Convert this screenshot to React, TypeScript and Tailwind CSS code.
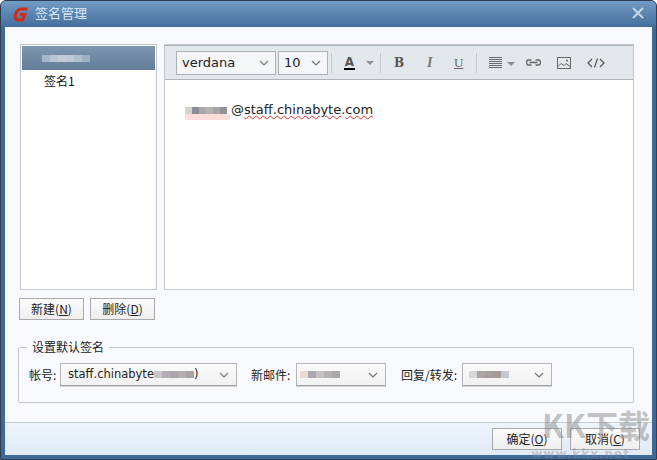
import type { ReactNode } from "react";

const FONT = "font-['DejaVu_Sans','Noto_Sans_CJK_SC',sans-serif]";
const CJK = "font-['Noto_Sans_CJK_SC','DejaVu_Sans',sans-serif]";

// mosaic that hides the private bits of the address
function Mosaic({ colors, cell = 7, h = 7 }: { colors: string[]; cell?: number; h?: number }) {
    return (
        <span className="inline-flex shrink-0">
            {colors.map((c, i) => (
                <span key={i} style={{ background: c, width: cell, height: h }} />
            ))}
        </span>
    );
}

function Chevron({ className = "" }: { className?: string }) {
    return (
        <svg width="10" height="6" viewBox="0 0 10 6" fill="none" className={className}>
            <path d="M1 1l4 4 4-4" stroke="#777" strokeWidth="1.2" />
        </svg>
    );
}

function Caret() {
    return <span className="w-0 h-0 border-x-[4px] border-x-transparent border-t-[4px] border-t-[#8a9096]" />;
}

function Select({ width, children }: { width: string; children: ReactNode }) {
    return (
        <div className={`${width} h-[23px] flex items-center justify-between pl-[7px] pr-[7px] border border-[#b4b4b4] border-b-[#a0a0a0] bg-gradient-to-b from-[#fbfbfb] to-[#f1f1f1] shadow-[0_1px_0_#d5d5d5]`}>
            {children}
            <Chevron />
        </div>
    );
}

function Button({ label, hot, width }: { label: string; hot: string; width: string }) {
    return (
        <button className={`${width} h-[22px] flex items-center justify-center border border-[#a9a9a9] bg-gradient-to-b from-[#fcfcfc] to-[#eeeeee] text-[12px] text-[#222] ${CJK}`}>
            {label}(<span className="underline">{hot}</span>)
        </button>
    );
}

function ToolbarDivider() {
    return <span className="w-px h-[20px] bg-[#c3c9cd]" />;
}

export default function App() {
    return (
        <div className={`w-[657px] h-[460px] relative overflow-hidden flex flex-col bg-[#3f6a98] border border-[#2e3f55] rounded-t-[6px] ${FONT}`}>
            {/* title bar */}
            <div className="h-[26px] shrink-0 flex items-center pl-[12px] pr-[10px] pb-[2px] bg-gradient-to-b from-[#729bc6] to-[#446e9c]">
                <svg width="16" height="17" viewBox="0 0 16 17" fill="none" className="mt-[2px]">
                    <path d="M14.500 3H8C5 3 3.500 5.500 2.500 8.500 1.500 12 2.500 14 5 14H9.500L11.500 8.500H7" stroke="#cf2a14" strokeWidth="3.200" />
                </svg>
                <span className={`ml-[6px] text-[13px] text-[#d9e6f3] ${CJK}`}>签名管理</span>
                <svg width="12" height="12" viewBox="0 0 12 12" className="ml-auto mr-[2px]">
                    <path d="M1 1l10 10M11 1L1 11" stroke="#c4d6e8" strokeWidth="2" />
                </svg>
            </div>

            {/* client area */}
            <div className="flex-1 mx-1 mb-1 flex flex-col bg-[#f8faff]">
                <div className="flex-1 flex flex-col pt-[17px] pl-[14px] pr-[18px]">
                    <div className="flex h-[246px] pl-px gap-[7px]">
                        {/* signature list */}
                        <div className={`w-[137px] border border-[#c2c7cc] bg-white p-px text-[12px] ${CJK}`}>
                            <div className="h-[24px] flex items-center pl-5 bg-gradient-to-b from-[#7d97b0] to-[#637d98]">
                                <Mosaic cell={8} colors={["#a5b7c8", "#b7c6d3", "#c1ced9", "#bccad6", "#aebfce", "#9fb2c4"]} />
                            </div>
                            <div className="pl-[22px] pt-[1px] text-[#111] leading-[20px]">签名1</div>
                        </div>

                        {/* editor */}
                        <div className="flex-1 flex flex-col border border-[#c2c7cc] bg-white">
                            <div className="h-[35px] shrink-0 flex items-center pl-[11px] bg-[#e2e7ea] border-b border-[#b0b4b8] border-t border-t-[#b0b4b8]">
                                <div className="w-[100px] h-[24px] flex items-center justify-between pl-[5px] pr-[6px] pt-[1px] bg-[#f5f6f7] border border-[#aeb2b5] text-[13px] text-[#222]">
                                    verdana
                                    <Chevron />
                                </div>
                                <div className="ml-[2px] w-[50px] h-[24px] flex items-center justify-between pl-[5px] pr-[6px] pt-[1px] bg-[#f5f6f7] border border-[#aeb2b5] text-[13px] text-[#222]">
                                    10
                                    <Chevron />
                                </div>
                                <span className="ml-[3px] flex"><ToolbarDivider /></span>
                                <div className="ml-[12px] flex flex-col items-center w-[11px]">
                                    <span className="text-[12px] font-bold leading-[12px] text-[#555]">A</span>
                                    <span className="w-[11px] h-[2px] bg-black" />
                                </div>
                                <span className="ml-[11px] flex"><Caret /></span>
                                <span className="ml-[6px] flex"><ToolbarDivider /></span>
                                <span className="ml-[13px] w-[10px] text-[12px] leading-[14px] font-bold text-[#555] font-['DejaVu_Serif',serif]">B</span>
                                <span className="ml-[23px] w-[7px] text-[14px] leading-[14px] italic font-bold text-[#777] font-['Liberation_Serif',serif]">I</span>
                                <span className="ml-[20px] w-[9px] text-[13px] leading-[14px] underline text-[#666] font-['Liberation_Serif',serif]">U</span>
                                <span className="ml-[13px] flex"><ToolbarDivider /></span>
                                <svg width="13" height="11" viewBox="0 0 13 11" className="ml-[12px]">
                                    <path d="M0 .5h13M0 2.500h13M0 4.500h13M0 6.500h13M0 8.500h13M0 10.500h13" stroke="#666b70" />
                                </svg>
                                <span className="ml-[5px] mt-[3px] flex"><Caret /></span>
                                <svg width="15" height="7" viewBox="0 0 15 7" fill="none" className="ml-[11px]">
                                    <path d="M5.500 1H2Q.7 1 .7 3.500T2 6H5.500M9.500 1H13Q14.300 1 14.300 3.500T13 6H9.500M3.500 3.500H11.500" stroke="#666" strokeWidth="1.300" />
                                </svg>
                                <svg width="14" height="12" viewBox="0 0 14 12" fill="none" className="ml-[16px]">
                                    <rect x=".5" y=".5" width="13" height="11" stroke="#666" />
                                    <path d="M1 9.500l3-3 3 2 2-2 4 3" stroke="#666" />
                                    <circle cx="10" cy="3.500" r="1" fill="#666" />
                                </svg>
                                <svg width="18" height="10" viewBox="0 0 18 10" fill="none" className="ml-[16px]">
                                    <path d="M5 1L1 5l4 4M13 1l4 4-4 4M10.500.5L7.500 9.500" stroke="#555" strokeWidth="1.200" />
                                </svg>
                            </div>
                            <div className="pl-[20px] pt-[21px] flex items-center text-[13px] leading-[18px] text-[#222]">
                                <span className="flex flex-col mr-[1px]">
                                    <Mosaic colors={["#d3d2cc", "#8b8e94", "#aaa7a9", "#b5b2b2", "#a8a4a6", "#938f97"]} />
                                    <span className="h-[6px] w-[45px] bg-[#fddcdc] mb-[-6px]" />
                                </span>
                                <span>@<span className="underline decoration-wavy decoration-[#e03030] decoration-1">staff.chinabyte</span>.<span className="underline decoration-wavy decoration-[#e03030] decoration-1">com</span></span>
                            </div>
                        </div>
                    </div>

                    {/* new / delete */}
                    <div className="flex gap-[6px] mt-2">
                        <Button label="新建" hot="N" width="w-[65px]" />
                        <Button label="删除" hot="D" width="w-[65px]" />
                    </div>

                    {/* default signature group */}
                    <fieldset className="mt-[20px] ml-[-1px] h-[63px] border border-[#c4c7ca] rounded-[2px] pl-[10px] pr-0 flex">
                        <legend className={`ml-[-2px] px-[5px] text-[12px] leading-[14px] text-[#222] ${CJK}`}>设置默认签名</legend>
                        <div className={`flex items-center h-[23px] mt-[9px] text-[12px] text-[#222] ${CJK}`}>
                            <span className="w-[31px] shrink-0">帐号:</span>
                            <Select width="w-[177px]">
                                <span className={`flex items-center text-[11.500px] ${FONT}`}>
                                    staff.chinabyte
                                    <Mosaic cell={8} colors={["#c8c6c8", "#b2aeb4", "#aaa6ac", "#b3afb1", "#a9a5a7"]} />
                                    )
                                </span>
                            </Select>
                            <span className="ml-[14px] w-[45px] shrink-0">新邮件:</span>
                            <Select width="w-[90px]">
                                <span className="ml-[-4px] flex">
                                    <Mosaic cell={8} colors={["#e8dcd0", "#a8a8ae", "#c4c0c0", "#b4b2b4", "#aaa8aa"]} />
                                </span>
                            </Select>
                            <span className="ml-[15px] w-[61px] shrink-0">回复/转发:</span>
                            <Select width="w-[90px]">
                                <span className="ml-[-1px] flex">
                                    <Mosaic cell={8} colors={["#d8d6d6", "#aaa4a4", "#a49e9e", "#a69a96", "#c4c6d0"]} />
                                </span>
                            </Select>
                        </div>
                    </fieldset>
                </div>

                {/* footer */}
                <div className="h-[33px] shrink-0 mt-[17px] flex items-center justify-end gap-[8px] pr-[12px] pb-[1px] border-t border-[#c6ccd2] bg-gradient-to-b from-[#eef4fb] to-[#dfeaf6]">
                    <Button label="确定" hot="O" width="w-[70px]" />
                    <Button label="取消" hot="C" width="w-[70px]" />
                </div>
            </div>

            {/* watermark */}
            <div className={`absolute right-[6px] top-[403px] text-[32px] leading-[40px] font-bold text-[#8a8a8a]/50 ${CJK}`}>KK下载</div>
            <div className="absolute right-[26px] top-[447px] text-[12px] leading-[12px] font-bold tracking-[1px] text-[#8a8a8a]/40">www.kkx.net</div>
        </div>
    );
}
